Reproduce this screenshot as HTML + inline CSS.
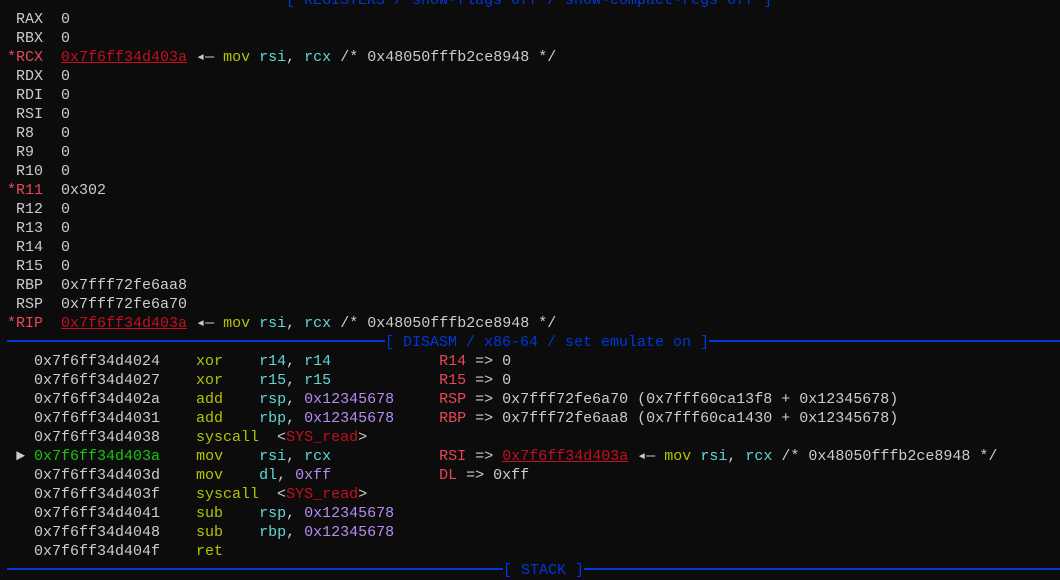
<!DOCTYPE html>
<html><head><meta charset="utf-8"><style>
html,body{margin:0;padding:0;background:#0c0c0c;width:1060px;height:572px;overflow:hidden}
pre{position:absolute;left:7px;top:-9px;margin:0;font-family:"Liberation Mono","DejaVu Sans Mono",monospace;font-size:15px;line-height:19px;color:#cccccc;white-space:pre}
.r{color:#e74856}.a{color:#c50f1f;text-decoration:underline}
.y{color:#b5c400}.c{color:#61d6d6}.p{color:#b48cf0}.g{color:#16c60c}.d{color:#c50f1f}
.b{color:#0037da}
.ln{display:inline-block;height:2px;background:#0037da;vertical-align:middle;position:relative;top:-1px}
</style></head><body><pre><span class="ln" style="width:279px"></span><span class="b">[ REGISTERS / show-flags off / show-compact-regs off ]</span><span class="ln" style="width:300px"></span>
 RAX  0
 RBX  0
<span class="r">*RCX</span>  <span class="a">0x7f6ff34d403a</span> ◂— <span class="y">mov</span> <span class="c">rsi</span>, <span class="c">rcx</span> /* 0x48050fffb2ce8948 */
 RDX  0
 RDI  0
 RSI  0
 R8   0
 R9   0
 R10  0
<span class="r">*R11</span>  0x302
 R12  0
 R13  0
 R14  0
 R15  0
 RBP  0x7fff72fe6aa8
 RSP  0x7fff72fe6a70
<span class="r">*RIP</span>  <span class="a">0x7f6ff34d403a</span> ◂— <span class="y">mov</span> <span class="c">rsi</span>, <span class="c">rcx</span> /* 0x48050fffb2ce8948 */
<span class="ln" style="width:378px"></span><span class="b">[ DISASM / x86-64 / set emulate on ]</span><span class="ln" style="width:360px"></span>
   0x7f6ff34d4024    <span class="y">xor</span>    <span class="c">r14</span>, <span class="c">r14</span>            <span class="r">R14</span> =&gt; 0
   0x7f6ff34d4027    <span class="y">xor</span>    <span class="c">r15</span>, <span class="c">r15</span>            <span class="r">R15</span> =&gt; 0
   0x7f6ff34d402a    <span class="y">add</span>    <span class="c">rsp</span>, <span class="p">0x12345678</span>     <span class="r">RSP</span> =&gt; 0x7fff72fe6a70 (0x7fff60ca13f8 + 0x12345678)
   0x7f6ff34d4031    <span class="y">add</span>    <span class="c">rbp</span>, <span class="p">0x12345678</span>     <span class="r">RBP</span> =&gt; 0x7fff72fe6aa8 (0x7fff60ca1430 + 0x12345678)
   0x7f6ff34d4038    <span class="y">syscall</span>  &lt;<span class="d">SYS_read</span>&gt;
 ► <span class="g">0x7f6ff34d403a</span>    <span class="y">mov</span>    <span class="c">rsi</span>, <span class="c">rcx</span>            <span class="r">RSI</span> =&gt; <span class="a">0x7f6ff34d403a</span> ◂— <span class="y">mov</span> <span class="c">rsi</span>, <span class="c">rcx</span> /* 0x48050fffb2ce8948 */
   0x7f6ff34d403d    <span class="y">mov</span>    <span class="c">dl</span>, <span class="p">0xff</span>            <span class="r">DL</span> =&gt; 0xff
   0x7f6ff34d403f    <span class="y">syscall</span>  &lt;<span class="d">SYS_read</span>&gt;
   0x7f6ff34d4041    <span class="y">sub</span>    <span class="c">rsp</span>, <span class="p">0x12345678</span>
   0x7f6ff34d4048    <span class="y">sub</span>    <span class="c">rbp</span>, <span class="p">0x12345678</span>
   0x7f6ff34d404f    <span class="y">ret</span>
<span class="ln" style="width:496px"></span><span class="b">[ STACK ]</span><span class="ln" style="width:480px"></span></pre></body></html>
